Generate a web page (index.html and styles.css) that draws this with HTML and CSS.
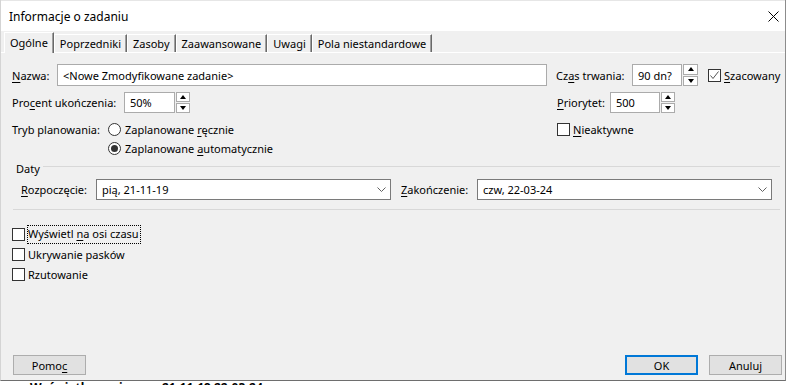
FILE: index.html
```html
<!DOCTYPE html>
<html lang="pl">
<head>
    <meta charset="UTF-8">
    <title>Informacje o zadaniu</title>
    <link rel="stylesheet" href="styles.css">
</head>
<body>
    <div class="dialog">
        <div class="titlebar">
            <span class="title">Informacje o zadaniu</span>
            <svg class="close" width="11" height="11" viewBox="0 0 11 11">
                <path d="M0.5 0.5 L10.5 10.5 M10.5 0.5 L0.5 10.5" stroke="#000" stroke-width="1" fill="none"/>
            </svg>
        </div>

        <div class="tabs">
            <div class="tab active">Ogólne</div>
            <div class="tab">Poprzedniki</div>
            <div class="tab">Zasoby</div>
            <div class="tab">Zaawansowane</div>
            <div class="tab">Uwagi</div>
            <div class="tab">Pola niestandardowe</div>
        </div>

        <div class="panel">
            <div class="row row-name">
                <div class="left">
                    <span class="lbl w-name"><u>N</u>azwa:</span>
                    <div class="field grow">&lt;Nowe Zmodyfikowane zadanie&gt;</div>
                </div>
                <div class="right">
                    <span class="lbl w-czas">Cz<u>a</u>s trwania:</span>
                    <div class="field w-small">90 dn?</div>
                    <div class="spin"><span class="up"></span><span class="down"></span></div>
                    <span class="check check-est">
                        <span class="box">
                            <svg width="11" height="11" viewBox="0 0 11 11"><path d="M1.5 5.5 L4 8.5 L9.5 1.5" stroke="#555" stroke-width="1" fill="none"/></svg>
                        </span>
                        <span><u>S</u>zacowany</span>
                    </span>
                </div>
            </div>

            <div class="row row-pct">
                <div class="left">
                    <span class="lbl w-pct">Pro<u>c</u>ent ukończenia:</span>
                    <div class="field w-pctfield">50%</div>
                    <div class="spin"><span class="up"></span><span class="down"></span></div>
                </div>
                <div class="right shift">
                    <span class="lbl w-prio"><u>P</u>riorytet:</span>
                    <div class="field w-small">500</div>
                    <div class="spin"><span class="up"></span><span class="down"></span></div>
                </div>
            </div>

            <div class="row row-mode">
                <div class="left top">
                    <span class="lbl w-mode">Tryb planowania:</span>
                    <div class="radios">
                        <span class="radio"><span class="dot"></span><span>Zaplanowane <u>r</u>ęcznie</span></span>
                        <span class="radio on"><span class="dot"></span><span>Zaplanowane <u>a</u>utomatycznie</span></span>
                    </div>
                </div>
                <div class="right shift top">
                    <span class="check check-line">
                        <span class="box"></span>
                        <span><u>N</u>ieaktywne</span>
                    </span>
                </div>
            </div>

            <div class="group-head">
                <span class="group-name">Daty</span>
                <span class="group-line"></span>
            </div>

            <div class="dates">
                <span class="lbl w-start"><u>R</u>ozpoczęcie:</span>
                <div class="combo">
                    <span>pią, 21-11-19</span>
                    <svg width="9" height="5" viewBox="0 0 9 5"><path d="M0.5 0.5 L4.5 4.5 L8.5 0.5" stroke="#606060" stroke-width="1" fill="none"/></svg>
                </div>
                <span class="lbl w-end"><u>Z</u>akończenie:</span>
                <div class="combo">
                    <span>czw, 22-03-24</span>
                    <svg width="9" height="5" viewBox="0 0 9 5"><path d="M0.5 0.5 L4.5 4.5 L8.5 0.5" stroke="#606060" stroke-width="1" fill="none"/></svg>
                </div>
            </div>

            <div class="separator"></div>

            <div class="options">
                <span class="check check-line"><span class="box"></span><span class="focus">Wyświetl <u>n</u>a osi czasu</span></span>
                <span class="check check-line"><span class="box"></span><span>Ukrywanie pasków</span></span>
                <span class="check check-line"><span class="box"></span><span>Rzutowanie</span></span>
            </div>
        </div>

        <div class="footer">
            <button class="btn">Pomo<u>c</u></button>
            <div class="spacer"></div>
            <button class="btn default">OK</button>
            <button class="btn">Anuluj</button>
        </div>
    </div>
    <div class="behind">Wyświetl na osi czasu 21-11-19 22-03-24</div>
</body>
</html>
```

FILE: styles.css
```css
body {
    margin: 0;
    background-color: #fff;
    font-family: "Noto Sans", sans-serif;
    font-size: 11px;
    color: #000;
}
u {
    text-underline-offset: 2px;
}
.dialog {
    width: 786px;
    height: 381px;
    display: flex;
    flex-direction: column;
    background-color: #f0f0f0;
    border-left: 1px solid #d4d4d4;
    border-right: 1px solid #8c8c8c;
    border-bottom: 1px solid #6e6e6e;
    box-sizing: border-box;
}

/* title bar */
.titlebar {
    height: 31px;
    display: flex;
    align-items: center;
    background-color: #fff;
    border-top: 1px solid #e6e6e6;
    box-sizing: border-box;
    padding: 0 6px 0 8px;
}
.title {
    font-size: 12px;
    flex: 1;
}

/* tabs */
.tabs {
    height: 22px;
    display: flex;
    align-items: flex-end;
    padding-left: 3px;
    border-bottom: 1px solid #fff;
    box-sizing: border-box;
}
.tab {
    height: 18px;
    display: flex;
    align-items: center;
    padding: 0 5px;
    border-left: 1px solid #fff;
    border-top: 1px solid #fff;
    border-right: 1px solid #696969;
    box-shadow: inset -1px 0 #a0a0a0;
    box-sizing: border-box;
}
.tab.active {
    height: 21px;
    margin-bottom: -1px;
    background-color: #f0f0f0;
    position: relative;
    padding-bottom: 1px;
}

/* panel */
.panel {
    flex: 1;
    padding: 11px 0 0 11px;
    display: flex;
    flex-direction: column;
}
.row {
    display: flex;
    align-items: center;
}
.row-pct {
    margin-top: 6px;
}
.row-mode {
    margin-top: 7px;
    align-items: flex-start;
}
.left {
    flex: 1;
    display: flex;
    align-items: center;
    margin-right: 9px;
}
.right {
    width: 229px;
    display: flex;
    align-items: center;
}
.shift {
    padding-left: 1px;
    box-sizing: border-box;
}
.top {
    align-items: flex-start;
}
.lbl {
    flex-shrink: 0;
}
.w-name { width: 45px; }
.w-czas { width: 76px; }
.w-pct { width: 112px; }
.w-prio { width: 53px; }
.w-mode { width: 96px; line-height: 19px; }
.w-start { width: 75px; margin-left: 9px; }
.w-end { width: 76px; margin-left: 10px; }

.field {
    height: 22px;
    box-sizing: border-box;
    border: 1px solid #ababab;
    background-color: #fff;
    display: flex;
    align-items: center;
    padding-left: 5px;
}
.grow {
    flex: 1;
}
.w-small { width: 50px; }
.w-pctfield { width: 51px; }
.row-pct .field { height: 21px; }

.spin {
    width: 15px;
    height: 22px;
    margin-left: 1px;
    display: flex;
    flex-direction: column;
    gap: 1px;
}
.row-pct .spin {
    height: 21px;
    width: 14px;
}
.spin span {
    flex: 1;
    border: 1px solid #ababab;
    background-color: #fff;
    display: flex;
    align-items: center;
    justify-content: center;
}
.spin span::after {
    content: "";
    border-left: 3px solid transparent;
    border-right: 3px solid transparent;
}
.spin .up::after {
    border-bottom: 4px solid #000;
}
.spin .down::after {
    border-top: 4px solid #000;
}

/* checkboxes and radios */
.check {
    display: flex;
    align-items: center;
}
.check-est {
    margin-left: 10px;
}
.check-line {
    height: 19px;
}
.box {
    width: 13px;
    height: 13px;
    box-sizing: border-box;
    border: 1px solid #333;
    background-color: #fff;
    margin-right: 3px;
    display: flex;
    align-items: center;
    justify-content: center;
    flex-shrink: 0;
}
.radios {
    display: flex;
    flex-direction: column;
}
.radio {
    height: 19px;
    display: flex;
    align-items: center;
}
.dot {
    width: 13px;
    height: 13px;
    box-sizing: border-box;
    border: 1px solid #333;
    border-radius: 50%;
    background-color: #fff;
    margin-right: 4px;
    display: flex;
    align-items: center;
    justify-content: center;
}
.radio.on .dot::after {
    content: "";
    width: 7px;
    height: 7px;
    border-radius: 50%;
    background-color: #333;
}

/* dates group */
.group-head {
    margin-top: 2px;
    height: 16px;
    display: flex;
    align-items: center;
    padding-left: 4px;
}
.group-line {
    flex: 1;
    height: 1px;
    background-color: #d8d8d8;
    margin: 0 5px 3px 3px;
}
.dates {
    margin-top: 3px;
    display: flex;
    align-items: center;
}
.combo {
    width: 295px;
    height: 21px;
    box-sizing: border-box;
    border: 1px solid #7a7a7a;
    background-color: #fff;
    display: flex;
    align-items: center;
    justify-content: space-between;
    padding: 0 4px 0 5px;
}
.separator {
    margin: 9px 5px 0 1px;
    height: 1px;
    background-color: #d8d8d8;
}
.options {
    margin-top: 14px;
    display: flex;
    flex-direction: column;
}
.options .check-line {
    height: 20px;
}
.focus {
    outline: 1px dotted #000;
    padding: 0 1px 2px 0;
}

/* footer */
.footer {
    display: flex;
    padding: 0 3px 5px 12px;
    gap: 11px;
}
.spacer {
    flex: 1;
}
.btn {
    width: 73px;
    height: 20px;
    background-color: #e1e1e1;
    border: 1px solid #adadad;
    font-family: "Noto Sans", sans-serif;
    font-size: 11px;
    color: #000;
    padding: 0;
}
.btn.default {
    border: 2px solid #0078d7;
}

.behind {
    height: 4px;
    overflow: hidden;
    padding-left: 30px;
    font-weight: bold;
    font-size: 12px;
    line-height: 14px;
}
```
